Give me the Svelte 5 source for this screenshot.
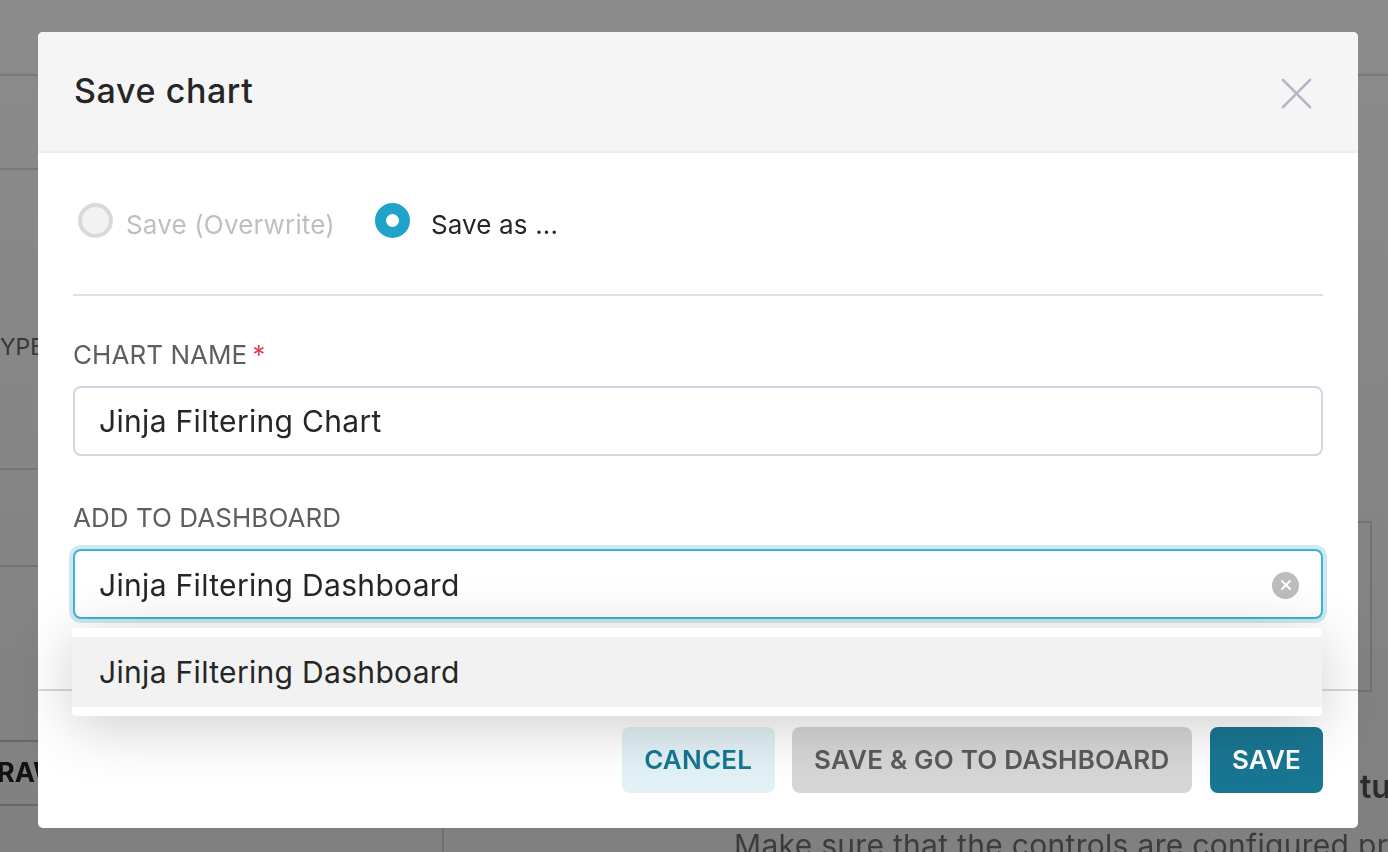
<script>
  const dashboard = "Jinja Filtering Dashboard";
  const chartName = "Jinja Filtering Chart";
</script>

<div class="page">
  <div class="backdrop">
    <div class="bg-line" style="top:74px;left:0;width:1388px"></div>
    <div class="bg-line" style="top:168px;left:0;width:38px"></div>
    <div class="bg-line" style="top:468px;left:0;width:38px"></div>
    <div class="bg-line" style="top:565px;left:0;width:38px"></div>
    <div class="bg-text type">YPE</div>
    <div class="bg-raw">RAW</div>
    <div class="bg-panel"></div>
    <div class="bg-vline"></div>
    <div class="bg-heading">tu</div>
    <div class="bg-copy">Make sure that the controls are configured pr</div>
    <div class="overlay"></div>
  </div>

  <div class="modal">
    <header class="modal-header">
      <h4>Save chart</h4>
      <svg class="close" viewBox="0 0 32 32" width="31" height="31" aria-label="Close">
        <path d="M2 2 L30 30 M30 2 L2 30" fill="none" stroke="#b2b5c2" stroke-width="2.6" stroke-linecap="round" />
      </svg>
    </header>

    <div class="modal-body">
      <div class="radios">
        <label class="radio disabled"><span class="dot"></span><span>Save (Overwrite)</span></label>
        <label class="radio checked"><span class="dot"></span><span>Save as ...</span></label>
      </div>
      <hr />
      <div class="field-label first">CHART NAME<span class="req">*</span></div>
      <div class="input">{chartName}</div>
      <div class="field-label second">ADD TO DASHBOARD</div>
      <div class="select-wrap">
        <div class="input focused">
          <span>{dashboard}</span>
          <span class="clear">
            <svg viewBox="0 0 12 12" width="12" height="12">
              <path d="M2 2 L10 10 M10 2 L2 10" stroke="#fff" stroke-width="2" stroke-linecap="round" fill="none" />
            </svg>
          </span>
        </div>
        <div class="menu">
          <div class="option">{dashboard}</div>
        </div>
      </div>
    </div>

    <footer class="modal-footer">
      <button class="btn cancel">CANCEL</button>
      <button class="btn gray">SAVE &amp; GO TO DASHBOARD</button>
      <button class="btn primary">SAVE</button>
    </footer>
  </div>
</div>

<style>
  :global(body) {
    margin: 0;
    font-family: Inter, "Liberation Sans", sans-serif;
    background: #888;
  }

  .page {
    width: 1388px;
    height: 852px;
    position: relative;
    overflow: hidden;
    padding: 32px 30px 24px 38px;
    box-sizing: border-box;
  }

  .backdrop {
    position: absolute;
    inset: 0;
    background: #fff;
    color: #222;
  }

  .overlay {
    position: absolute;
    inset: 0;
    background: linear-gradient(180deg, #8b8b8b 0%, #808080 100%);
    mix-blend-mode: multiply;
  }

  .bg-line {
    position: absolute;
    height: 2px;
    background: #e0e0e0;
  }

  .bg-text {
    position: absolute;
    font-size: 23px;
    color: #666;
  }

  .type {
    left: 0;
    top: 333px;
  }

  .bg-raw {
    position: absolute;
    left: 0;
    top: 740px;
    width: 78px;
    height: 66px;
    box-sizing: border-box;
    border-top: 2px solid #ccc;
    border-bottom: 2px solid #ccc;
    line-height: 62px;
    text-indent: -3px;
    font-size: 27px;
    font-weight: 700;
  }

  .bg-panel {
    position: absolute;
    left: 1300px;
    top: 521px;
    width: 72px;
    height: 171px;
    box-sizing: border-box;
    border: 2px solid #ddd;
  }

  .bg-vline {
    position: absolute;
    left: 442px;
    top: 800px;
    width: 2px;
    height: 52px;
    background: #ddd;
  }

  .bg-heading {
    position: absolute;
    left: 1360px;
    top: 767px;
    font-size: 32px;
    font-weight: 600;
    color: #555;
    white-space: nowrap;
  }

  .bg-copy {
    position: absolute;
    left: 734px;
    top: 827px;
    font-size: 30px;
    letter-spacing: 0.3px;
    color: #777;
    white-space: nowrap;
  }

  .modal {
    position: relative;
    width: 1320px;
    height: 796px;
    background: #fff;
    border-radius: 5px;
    display: flex;
    flex-direction: column;
  }

  .modal-header {
    height: 121px;
    flex: none;
    box-sizing: border-box;
    background: #f5f5f5;
    border-bottom: 2px solid #eee;
    border-radius: 5px 5px 0 0;
    display: flex;
    align-items: center;
    justify-content: space-between;
    padding: 0 46px 2px 36px;
  }

  h4 {
    margin: 0;
    font-size: 34px;
    font-weight: 450;
    letter-spacing: 0.6px;
    color: #262626;
  }

  .close {
    margin-top: 5px;
  }

  .modal-body {
    flex: none;
    height: 538px;
    box-sizing: border-box;
    padding: 0 35px;
    border-bottom: 2px solid #d9d9d9;
  }

  .radios {
    display: flex;
    gap: 40px;
    height: 141px;
    box-sizing: border-box;
    padding: 50px 0 0 5px;
  }

  .radio {
    display: flex;
    align-items: flex-start;
    gap: 13px;
    font-size: 26px;
    height: 36px;
    line-height: 44px;
    letter-spacing: 0.15px;
    color: #262626;
  }

  .radio.checked {
    gap: 21px;
  }

  .radio.disabled {
    color: #bfbfbf;
  }

  .dot {
    width: 35px;
    height: 35px;
    box-sizing: border-box;
    border-radius: 50%;
    flex: none;
  }

  .disabled .dot {
    background: #f2f2f2;
    border: 4px solid #d9d9d9;
  }

  .checked .dot {
    background: #fff;
    border: 11px solid #1fa3c9;
  }

  hr {
    margin: 0;
    border: 0;
    height: 2px;
    background: #e0e0e0;
  }

  .field-label {
    font-size: 26px;
    line-height: 30px;
    letter-spacing: 0.05px;
    color: #5e5e5e;
  }

  .field-label.first {
    margin-top: 44px;
    margin-bottom: 16px;
  }

  .field-label.second {
    margin-top: 47px;
    margin-bottom: 16px;
  }

  .req {
    color: #e04355;
    margin-left: 5px;
  }

  .input {
    height: 70px;
    box-sizing: border-box;
    border: 2px solid #d4d7e3;
    border-radius: 8px;
    padding: 0 24px;
    display: flex;
    align-items: center;
    justify-content: space-between;
    font-size: 30px;
    letter-spacing: 0.32px;
    color: #262626;
    background: #fff;
  }

  .input.focused {
    border-color: #3eb4d4;
    box-shadow: 0 0 0 4px #cfe8f1;
    padding-top: 2px;
  }

  .select-wrap {
    position: relative;
  }

  .clear {
    width: 27px;
    height: 27px;
    margin-right: -2px;
    border-radius: 50%;
    background: #bdbdbd;
    display: flex;
    align-items: center;
    justify-content: center;
  }

  .menu {
    position: absolute;
    left: -1px;
    top: 79px;
    width: 1250px;
    height: 88px;
    box-sizing: border-box;
    padding: 9px 0;
    background: #fff;
    border-radius: 4px;
    box-shadow: 0 10px 60px rgba(0, 0, 0, 0.2);
    z-index: 2;
  }

  .option {
    height: 70px;
    box-sizing: border-box;
    background: #f2f2f2;
    display: flex;
    align-items: center;
    padding-left: 27px;
    font-size: 30px;
    letter-spacing: 0.32px;
    color: #262626;
  }

  .modal-footer {
    display: flex;
    justify-content: flex-end;
    gap: 17px;
    padding: 36px 35px 0 0;
  }

  .btn {
    height: 66px;
    border: 0;
    border-radius: 8px;
    font-family: inherit;
    font-size: 26px;
    font-weight: 600;
    letter-spacing: 0.2px;
    padding: 0 22.5px 2px;
    white-space: nowrap;
  }

  .cancel {
    background: #e2f1f6;
    color: #15778f;
  }

  .gray {
    background: #d6d6d6;
    color: #5a5a5a;
  }

  .primary {
    background: #197693;
    color: #fff;
    margin-left: 1px;
    padding: 0 22px 2px;
  }
</style>
